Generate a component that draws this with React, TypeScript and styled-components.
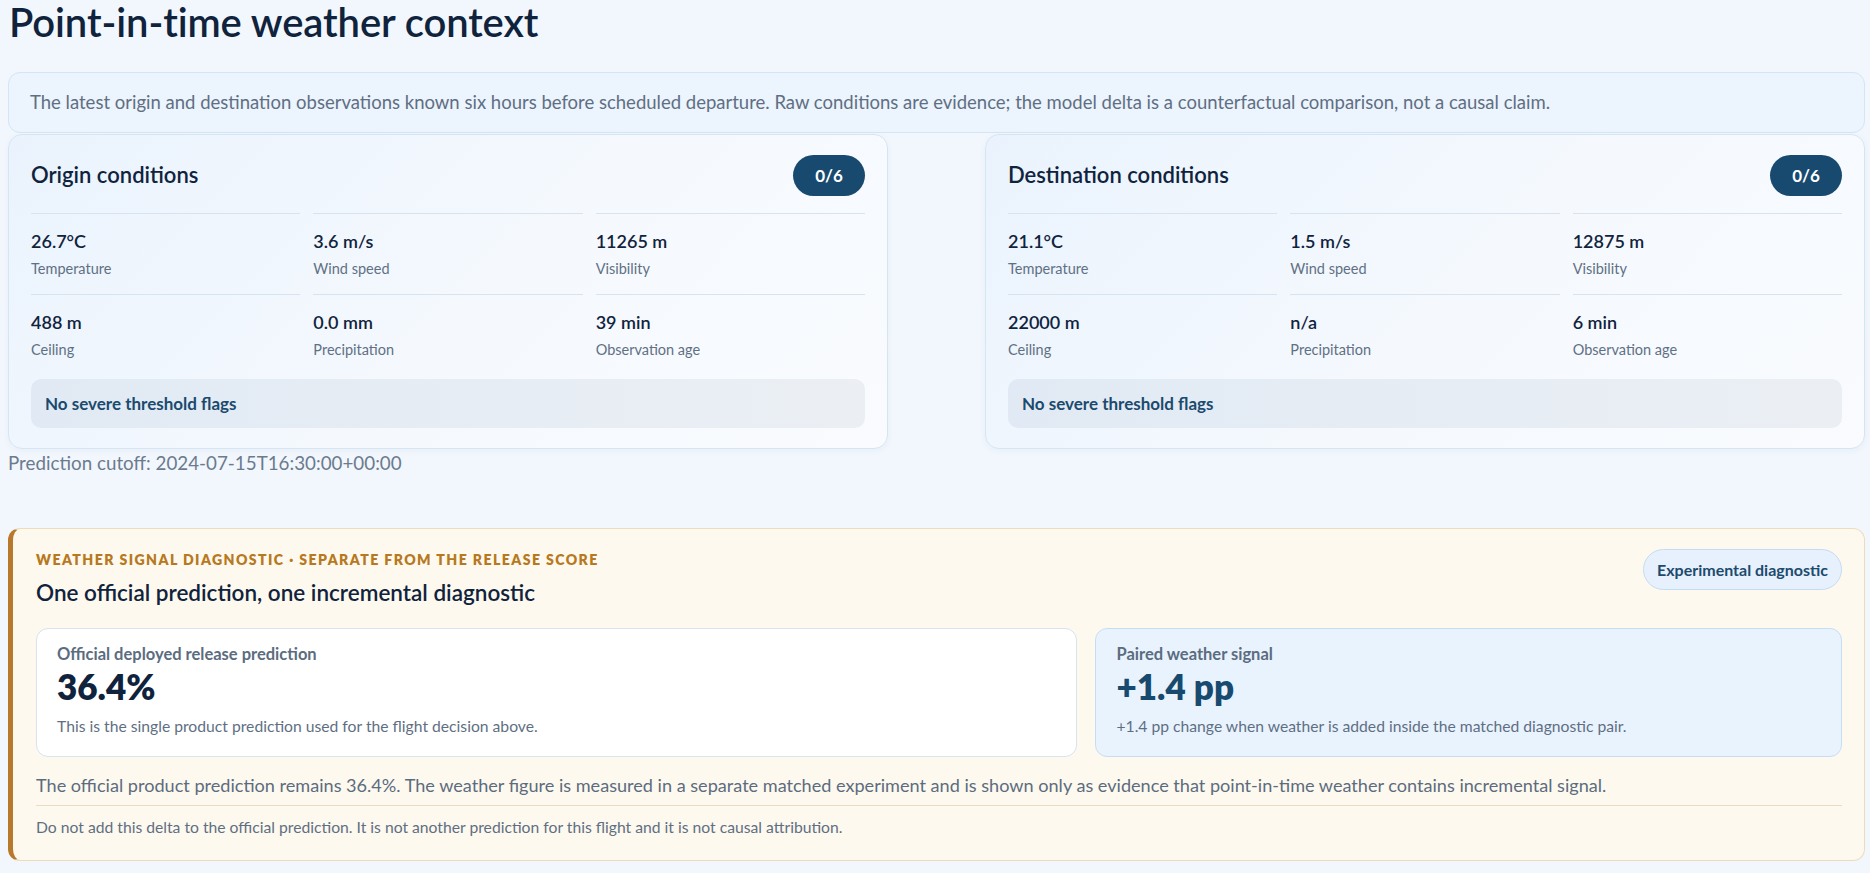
import React from "react";
import styled, { createGlobalStyle } from "styled-components";

const GlobalStyle = createGlobalStyle`
  html, body {
    margin: 0;
    padding: 0;
    background: #f2f7fd;
  }
  body {
    font-family: Lato, "Noto Sans", "Liberation Sans", sans-serif;
    color: #10233d;
    -webkit-font-smoothing: antialiased;
  }
  * { box-sizing: border-box; }
`;

const Page = styled.main`
  padding: 0 5px 12px 8px;
  display: flex;
  flex-direction: column;
`;

const Title = styled.h1`
  margin: 0 0 0 1px;
  font-size: 40px;
  line-height: 44px;
  font-weight: 600;
  color: #10233d;
  letter-spacing: -0.1px;
`;

const Intro = styled.p`
  margin: 28px 0 0;
  padding: 16px 21px;
  background: #ecf4fd;
  border: 1px solid #d4e5f6;
  border-radius: 12px;
  font-size: 18.5px;
  line-height: 27px;
  color: #5f6f83;
`;

const CardGrid = styled.div`
  display: grid;
  grid-template-columns: repeat(2, minmax(0, 880px));
  justify-content: space-between;
  margin-top: 1px;
`;

const Card = styled.section`
  padding: 20px 22px;
  border: 1px solid #d6e5f3;
  border-radius: 14px;
  background: linear-gradient(135deg, #eaf3fd 0%, #f5f9fe 55%, #f9fbfe 100%);
  box-shadow: 0 2px 6px rgba(30, 70, 120, 0.05);
`;

const CardHeader = styled.header`
  display: flex;
  align-items: center;
  justify-content: space-between;
  margin-bottom: 17px;
`;

const CardTitle = styled.h2`
  margin: 0;
  font-size: 22px;
  line-height: 1.3;
  font-weight: 600;
  color: #10233d;
`;

const CountBadge = styled.span`
  display: inline-flex;
  align-items: center;
  justify-content: center;
  width: 72px;
  height: 41px;
  border-radius: 999px;
  background: #184a6f;
  color: #ffffff;
  font-size: 17px;
  font-weight: 700;
`;

const MetricGrid = styled.dl`
  margin: 0;
  display: grid;
  grid-template-columns: repeat(3, minmax(0, 1fr));
  column-gap: 13px;
`;

const Metric = styled.div`
  border-top: 1px solid #d7e4f0;
  padding: 15px 0 15px;
  display: flex;
  flex-direction: column;
`;

const MetricValue = styled.dd`
  margin: 0;
  order: 1;
  font-size: 18px;
  line-height: 24px;
  font-weight: 600;
  color: #10233d;
`;

const MetricLabel = styled.dt`
  order: 2;
  margin-top: 5px;
  font-size: 14.5px;
  line-height: 21px;
  color: #607084;
`;

const FlagBox = styled.div`
  margin-top: 4px;
  padding: 14px;
  border-radius: 10px;
  background: linear-gradient(90deg, #e1eaf4 0%, #e7edf4 60%, #ebeff4 100%);
  font-size: 17px;
  line-height: 21px;
  font-weight: 700;
  color: #1b4a6e;
`;

const Cutoff = styled.p`
  margin: 1px 0 0;
  font-size: 18.8px;
  line-height: 26px;
  color: #6b7b8e;
`;

const Diagnostic = styled.section`
  margin-top: 52px;
  padding: 21px 22px 22px 23px;
  background: #fef9ee;
  border: 1px solid #ecdcb9;
  border-left: 5px solid #b8792a;
  border-radius: 12px;
`;

const DiagHeader = styled.header`
  display: flex;
  justify-content: space-between;
  align-items: flex-start;
`;

const Eyebrow = styled.p`
  margin: 0;
  font-size: 14.1px;
  line-height: 19.6px;
  font-weight: 800;
  letter-spacing: 0.1em;
  text-transform: uppercase;
  color: #b7791f;
`;

const DiagTitle = styled.h3`
  margin: 10px 0 0;
  font-size: 22.5px;
  line-height: 26px;
  font-weight: 600;
  color: #10233d;
`;

const Pill = styled.span`
  margin-top: -1px;
  display: inline-flex;
  align-items: center;
  height: 41px;
  padding: 0 13px;
  border-radius: 999px;
  background: #e6f1fd;
  border: 1px solid #c4dcf3;
  font-size: 16px;
  font-weight: 700;
  color: #1d4a6d;
`;

const Compare = styled.div`
  margin-top: 22px;
  display: grid;
  grid-template-columns: 1.395fr 1fr;
  gap: 18px;
`;

const Figure = styled.div<{ $tone: "official" | "signal" }>`
  padding: 15px 20px 19px;
  border-radius: 12px;
  border: 1px solid ${(p) => (p.$tone === "official" ? "#d6e4f2" : "#c6def5")};
  background: ${(p) => (p.$tone === "official" ? "#ffffff" : "#e9f3fe")};
`;

const FigureLabel = styled.div`
  font-size: 16.5px;
  line-height: 21px;
  font-weight: 700;
  color: #5b6c80;
`;

const FigureValue = styled.div<{ $tone: "official" | "signal" }>`
  margin-top: 2px;
  font-size: 35px;
  line-height: 38px;
  font-weight: 800;
  color: ${(p) => (p.$tone === "official" ? "#10233d" : "#174a6e")};
`;

const FigureNote = styled.div`
  margin-top: 10px;
  font-size: 15.7px;
  line-height: 22px;
  color: #5f6f83;
`;

const Summary = styled.p`
  margin: 15px 0 0;
  padding-bottom: 6px;
  border-bottom: 1px solid #eadcc0;
  font-size: 18.1px;
  line-height: 27px;
  color: #5b6c80;
`;

const Footnote = styled.p`
  margin: 10px 0 0;
  font-size: 15.7px;
  line-height: 22px;
  color: #5f6f83;
`;

type MetricItem = { value: string; label: string };

const origin: MetricItem[] = [
  { value: "26.7°C", label: "Temperature" },
  { value: "3.6 m/s", label: "Wind speed" },
  { value: "11265 m", label: "Visibility" },
  { value: "488 m", label: "Ceiling" },
  { value: "0.0 mm", label: "Precipitation" },
  { value: "39 min", label: "Observation age" },
];

const destination: MetricItem[] = [
  { value: "21.1°C", label: "Temperature" },
  { value: "1.5 m/s", label: "Wind speed" },
  { value: "12875 m", label: "Visibility" },
  { value: "22000 m", label: "Ceiling" },
  { value: "n/a", label: "Precipitation" },
  { value: "6 min", label: "Observation age" },
];

function ConditionsCard({ title, items }: { title: string; items: MetricItem[] }) {
  return (
    <Card>
      <CardHeader>
        <CardTitle>{title}</CardTitle>
        <CountBadge>0/6</CountBadge>
      </CardHeader>
      <MetricGrid>
        {items.map((m) => (
          <Metric key={m.label}>
            <MetricLabel>{m.label}</MetricLabel>
            <MetricValue>{m.value}</MetricValue>
          </Metric>
        ))}
      </MetricGrid>
      <FlagBox>No severe threshold flags</FlagBox>
    </Card>
  );
}

export default function App() {
  return (
    <>
      <GlobalStyle />
      <Page>
        <Title>Point-in-time weather context</Title>
        <Intro>
          The latest origin and destination observations known six hours before scheduled departure. Raw
          conditions are evidence; the model delta is a counterfactual comparison, not a causal claim.
        </Intro>
        <CardGrid>
          <ConditionsCard title="Origin conditions" items={origin} />
          <ConditionsCard title="Destination conditions" items={destination} />
        </CardGrid>
        <Cutoff>Prediction cutoff: 2024-07-15T16:30:00+00:00</Cutoff>
        <Diagnostic>
          <DiagHeader>
            <div>
              <Eyebrow>Weather signal diagnostic · separate from the release score</Eyebrow>
              <DiagTitle>One official prediction, one incremental diagnostic</DiagTitle>
            </div>
            <Pill>Experimental diagnostic</Pill>
          </DiagHeader>
          <Compare>
            <Figure $tone="official">
              <FigureLabel>Official deployed release prediction</FigureLabel>
              <FigureValue $tone="official">36.4%</FigureValue>
              <FigureNote>This is the single product prediction used for the flight decision above.</FigureNote>
            </Figure>
            <Figure $tone="signal">
              <FigureLabel>Paired weather signal</FigureLabel>
              <FigureValue $tone="signal">+1.4 pp</FigureValue>
              <FigureNote>+1.4 pp change when weather is added inside the matched diagnostic pair.</FigureNote>
            </Figure>
          </Compare>
          <Summary>
            The official product prediction remains 36.4%. The weather figure is measured in a separate matched
            experiment and is shown only as evidence that point-in-time weather contains incremental signal.
          </Summary>
          <Footnote>
            Do not add this delta to the official prediction. It is not another prediction for this flight and it is
            not causal attribution.
          </Footnote>
        </Diagnostic>
      </Page>
    </>
  );
}
